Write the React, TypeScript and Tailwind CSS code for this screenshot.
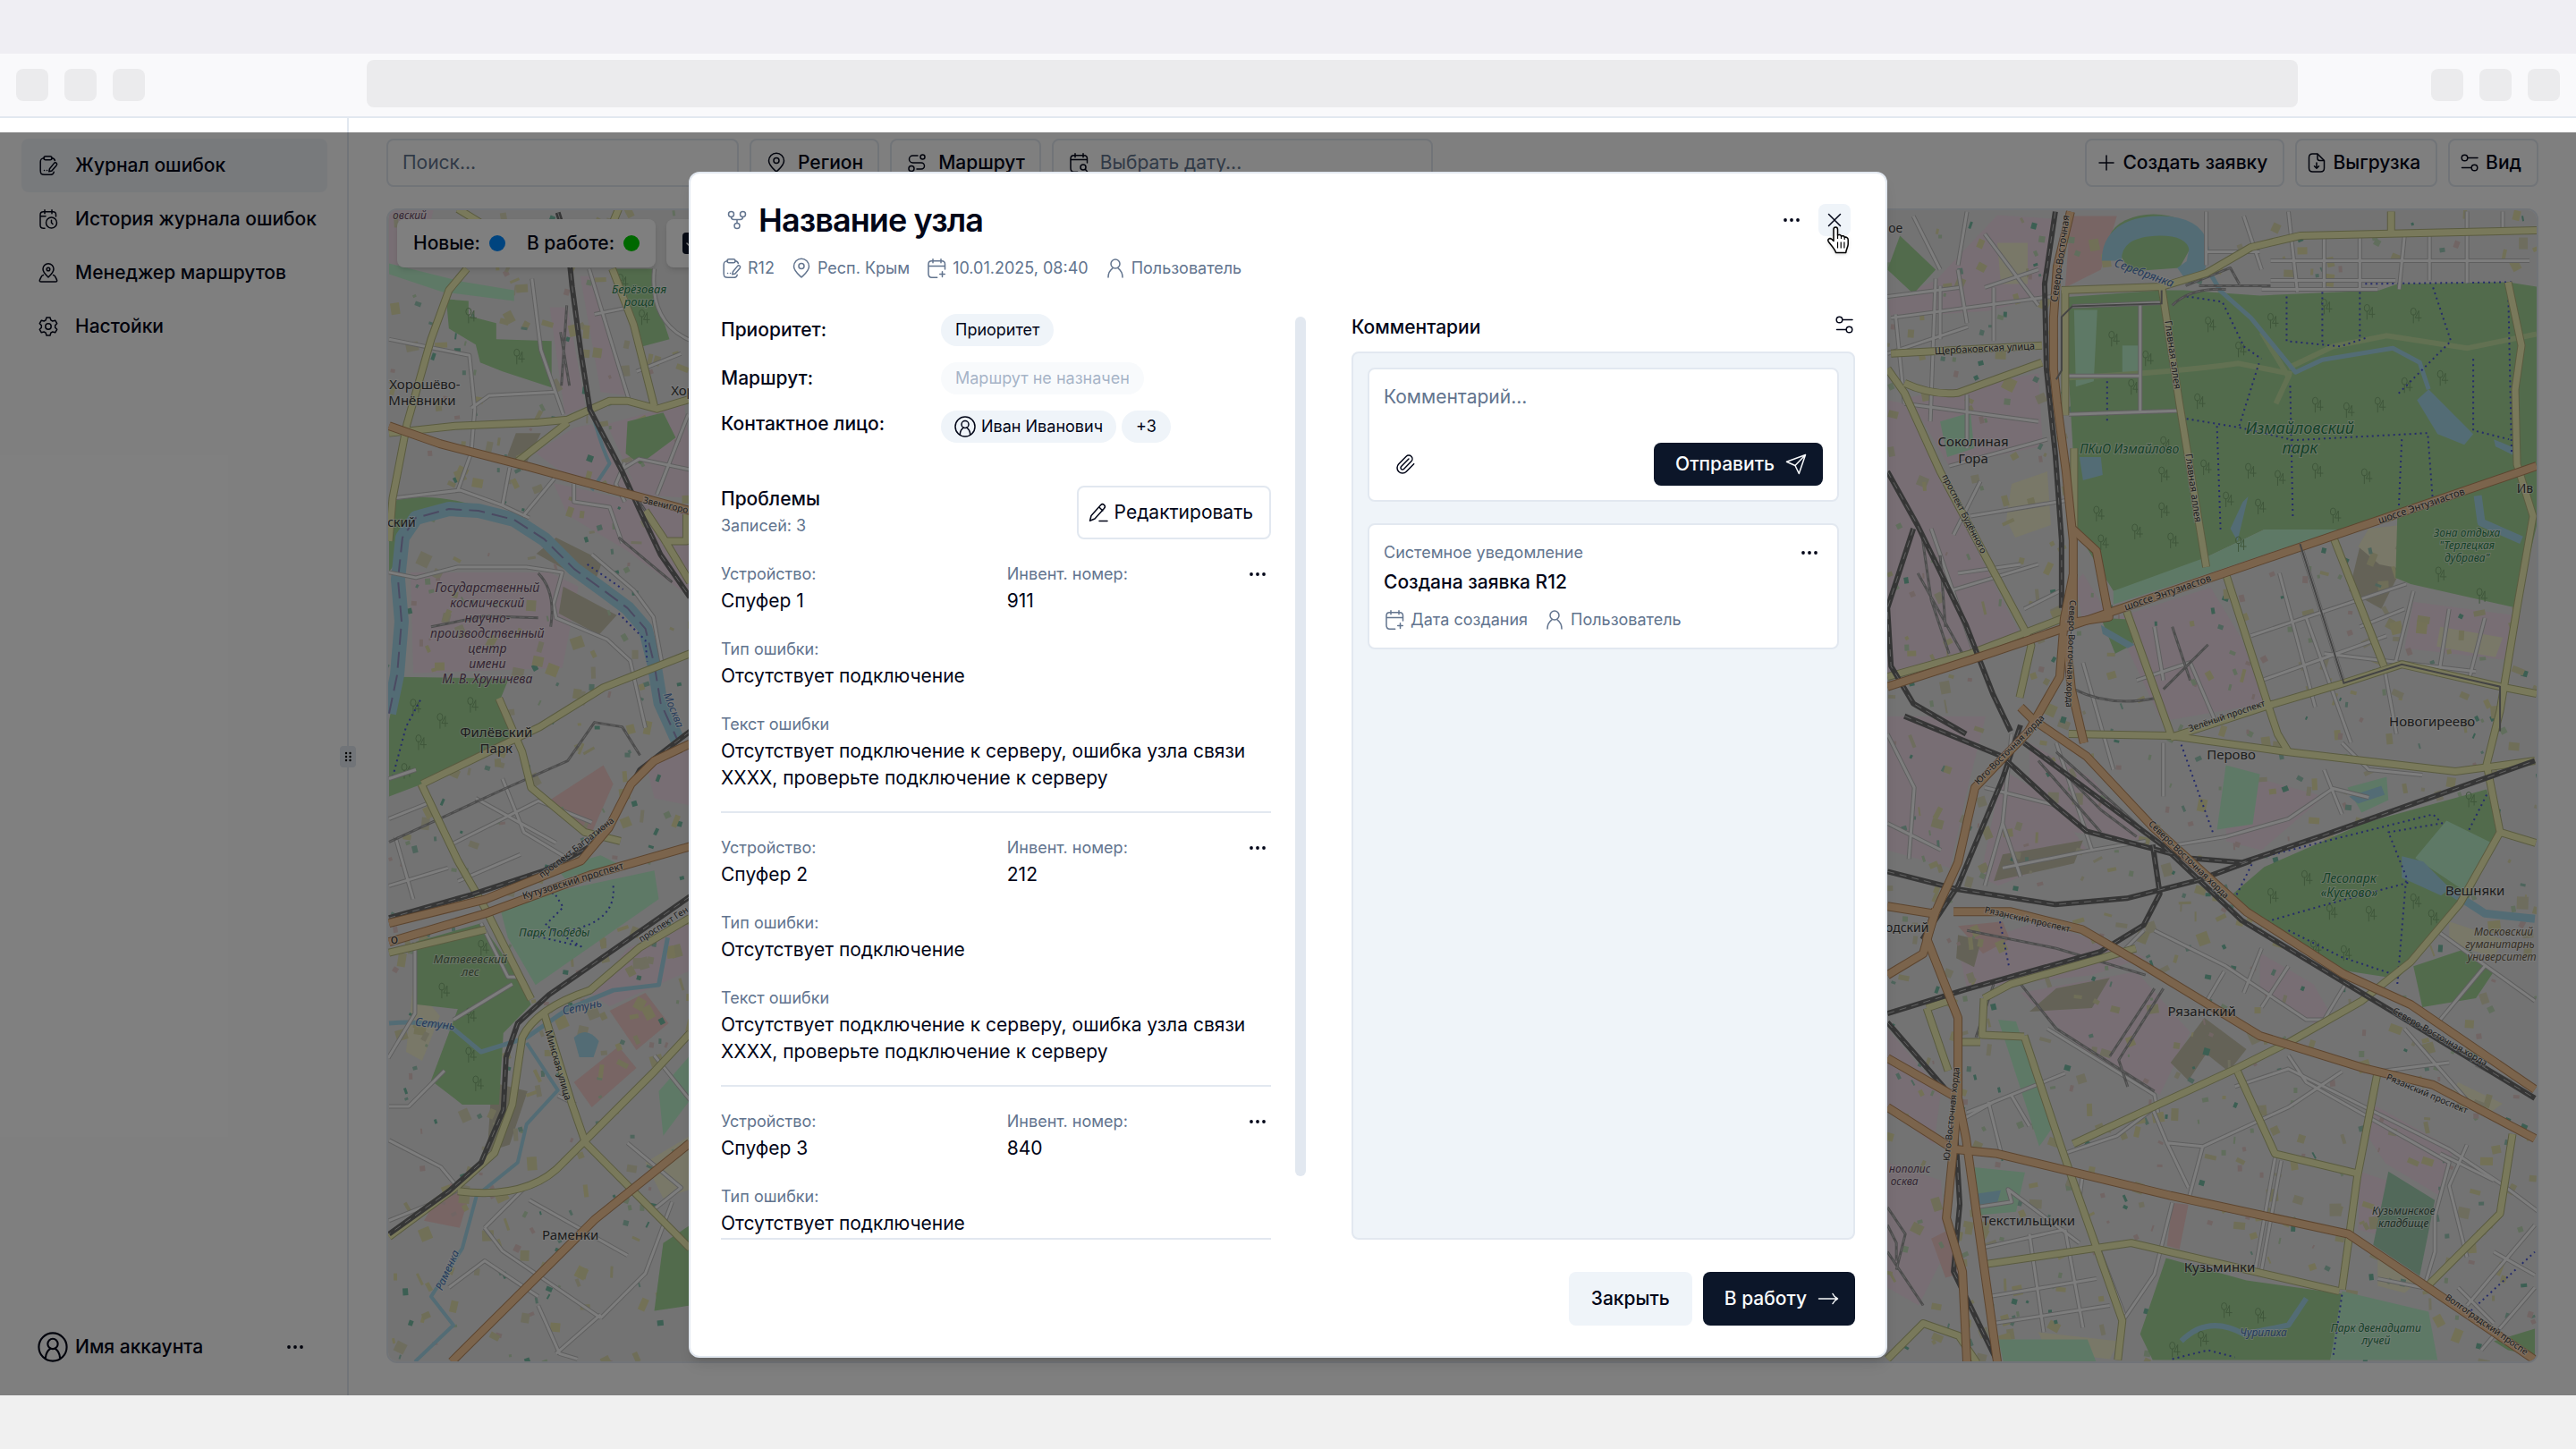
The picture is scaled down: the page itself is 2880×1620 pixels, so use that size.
import { ReactNode } from "react";
import clsx from "clsx";
import { Paperclip } from "lucide-react";

type IconProps = { className?: string };

const Svg = ({ className, children }: { className?: string; children: ReactNode }) => (
  <svg
    viewBox="0 0 24 24"
    fill="none"
    stroke="currentColor"
    strokeWidth={1.5}
    strokeLinecap="round"
    strokeLinejoin="round"
    aria-hidden="true"
    className={clsx("shrink-0", className ?? "h-6 w-6")}
  >
    {children}
  </svg>
);

const ClipboardEditIcon = (p: IconProps) => (
  <Svg {...p}>
    <path d="M7.5 3.8C4.6 4 3.2 4.6 3.2 8v9.5c0 4 1 4.8 4.8 4.8h5.5c3 0 4.4-.5 4.7-3M16 3.8c2 .2 3 .9 3.4 2.7" />
    <rect x="7" y="1.8" width="9" height="4" rx="2" />
    <path d="m12.8 18.8.6-3 5-6.2c.8-1 2-1 2.7-.3.8.7.7 1.7 0 2.6l-5.2 6.1-3.1.8ZM7.5 17.5h.1M10.5 17.5h.1" />
  </Svg>
);

const CalendarClockIcon = (p: IconProps) => (
  <Svg {...p}>
    <path d="M8 1.8v4M16 1.8v4M20.5 9V7c0-2.4-1-3.2-3.5-3.2H6.5C4 3.8 3 4.8 3 7.2v11.5c0 2.4 1 3.5 3.5 3.5H8M3 8.8h6" />
    <circle cx="15.5" cy="16" r="6" />
    <path d="M15.5 13.2V16l1.5 1.5" />
  </Svg>
);

const CalendarAddIcon = (p: IconProps) => (
  <Svg {...p}>
    <path d="M8 1.8v4M17 1.8v4M3 9.5h18.5M21.5 13V7.5c0-2.5-1-3.7-3.7-3.7H6.7C4 3.8 3 5 3 7.5V18c0 3 1 4.2 3.7 4.2h6M18.5 15.8v5.6M15.7 18.6h5.6" />
  </Svg>
);

const CalendarSearchIcon = (p: IconProps) => (
  <Svg {...p}>
    <path d="M8 1.8v4M17 1.8v4M3 8.5h18.5M21.5 12V7.5c0-2.5-1-3.7-3.7-3.7H6.7C4 3.8 3 5 3 7.5V18c0 3 1 4.2 3.7 4.2h4" />
    <circle cx="17" cy="17" r="3" />
    <path d="m19.3 19.3 2.2 2.4" />
  </Svg>
);

const MapUserIcon = (p: IconProps) => (
  <Svg {...p}>
    <path d="M12 17c-3-3-6-5.5-6-9.200a6 6 0 1 1 12 0C18 11.5 15 14 12 17Z" />
    <circle cx="12" cy="8" r="1.8" />
    <path d="M6.5 14.5c-1.5.3-2 .9-2.6 2.4l-1.4 3c-.6 1.4 0 2.1 1.5 2.1h16c1.5 0 2.1-.7 1.5-2.1l-1.4-3c-.6-1.500-1.100-2.100-2.600-2.400" />
  </Svg>
);

const SettingsIcon = (p: IconProps) => (
  <Svg {...p}>
    <path d="M10 2h4l.8 2.8 2 1.2 2.9-.8 2 3.5-2 2.1v2.4l2 2.1-2 3.5-2.9-.8-2 1.2L14 22h-4l-.8-2.8-2-1.2-2.9.8-2-3.5 2-2.1v-2.4l-2-2.1 2-3.5 2.9.8 2-1.2L10 2Z" />
    <circle cx="12" cy="12" r="3.2" />
  </Svg>
);

const PinIcon = (p: IconProps) => (
  <Svg {...p}>
    <path d="M12 22c-3.5-3.3-8.5-7-8.5-12.2a8.5 8.5 0 0 1 17 0C20.5 15 15.5 18.7 12 22Z" />
    <circle cx="12" cy="9.5" r="3" />
  </Svg>
);

const RouteIcon = (p: IconProps) => (
  <Svg {...p}>
    <circle cx="6" cy="18.5" r="3" />
    <circle cx="18.5" cy="5.5" r="2.5" />
    <path d="M13 4H7.5a4 4 0 0 0 0 8h9.500a3.500 3.500 0 0 1 0 7h-5" />
  </Svg>
);

const UserIcon = (p: IconProps) => (
  <Svg {...p}>
    <circle cx="12" cy="7" r="5" />
    <path d="M4 22c0-4.5 2-8 5-10.2M20 22c0-4.5-2-8-5-10.2" />
  </Svg>
);

const UserCircleIcon = (p: IconProps) => (
  <Svg {...p}>
    <circle cx="12" cy="12" r="11" />
    <circle cx="12" cy="9.5" r="4" />
    <path d="M6.3 20.5c.2-3.5 1.8-6 4-7.4M17.7 20.5c-.2-3.5-1.8-6-4-7.4" />
  </Svg>
);

const NodeIcon = (p: IconProps) => (
  <Svg {...p}>
    <circle cx="5.5" cy="5.5" r="3" />
    <circle cx="18.5" cy="5.5" r="3" />
    <circle cx="12" cy="18.5" r="3" />
    <path d="M5.5 8.5c0 2.3.8 3 3 3h7c2.2 0 3-.7 3-3M12 11.5v4" />
  </Svg>
);

const DotsIcon = (p: IconProps) => (
  <Svg {...p}>
    <g fill="currentColor" stroke="none">
      <circle cx="5" cy="12" r="1.9" />
      <circle cx="12" cy="12" r="1.9" />
      <circle cx="19" cy="12" r="1.9" />
    </g>
  </Svg>
);

const SlidersIcon = (p: IconProps) => (
  <Svg {...p}>
    <circle cx="6.5" cy="6.5" r="3.3" />
    <circle cx="17.5" cy="17.5" r="3.3" />
    <path d="M10 6.5h11M3.5 17.5H14" />
  </Svg>
);

const PlusIcon = (p: IconProps) => (
  <Svg {...p}>
    <path d="M12 4v16M4 12h16" />
  </Svg>
);

const FileDownIcon = (p: IconProps) => (
  <Svg {...p}>
    <path d="M13 2H7.5C4.500 2 3.500 3.200 3.500 6v12c0 2.800 1 4 4 4h9c3 0 4-1.200 4-4V9.500L13 2Z" />
    <path d="M13 2.500V7c0 1.700.8 2.500 2.500 2.500h4.500M12 12v6M9.500 15.800 12 18.200l2.500-2.400" />
  </Svg>
);

const PenIcon = (p: IconProps) => (
  <Svg {...p}>
    <path d="M4 15.500 14.500 3.800c1.300-1.400 2.800-1.400 4-.3 1.200 1.200 1.200 2.700-.1 4.100L8 19l-5.500 2.200L4 15.500ZM12.800 6l4 4M13 21.500h9" />
  </Svg>
);

const SendIcon = (p: IconProps) => (
  <Svg {...p}>
    <path d="M22.500 1.500 1.500 9.200l9.500 4.300 4.300 9 7.200-21ZM11 13.500 22 2" />
  </Svg>
);

const CloseIcon = (p: IconProps) => (
  <Svg {...p}>
    <path d="m5.500 5.500 13 13M18.500 5.500l-13 13" />
  </Svg>
);

const ArrowIcon = (p: IconProps) => (
  <Svg {...p}>
    <path d="M1.500 12h21M17 6.500c1.500 3 3 4.500 5.500 5.500-2.500 1-4 2.500-5.500 5.500" />
  </Svg>
);

const HandCursor = ({ className }: IconProps) => (
  <svg viewBox="0 0 28 32" className={className} aria-hidden="true">
    <path
      d="M9 16V4.500C9 1 13.500 1 13.500 4.500V11c1.500-1 3.500-.5 4 1 1.500-.8 3.300-.2 3.700 1.300 2-.6 4 .5 4 2.700v5c0 3-2 5-2.500 9.500H11.500C11 27 6 22 3.500 18.500 1.500 15.500 4.500 13.500 7 15.500l2 2Z"
      fill="#fff"
      stroke="#000"
      strokeWidth="1.5"
      strokeLinejoin="round"
    />
    <path d="M13.500 18.500v7M17.200 18.500v7M20.900 18.500v7M13.500 11v4M17.500 12v3M21.200 13.500V16" stroke="#000" strokeWidth="1.2" />
  </svg>
);

/* ---------- map ---------- */

// small repeatable generator, so that the houses stay in place between renders
const makeBuildings = () => {
  let seed = 17;
  const next = () => {
    seed = (seed * 16807) % 2147483647;
    return seed / 2147483647;
  };
  const colors = ["#dcdabc", "#e2e0ae", "#e6e3ac", "#dedcb0", "#9ccab8", "#78bea6", "#e3cbc8", "#c2dcba"];
  const list: { x: number; y: number; w: number; h: number; r: number; c: string }[] = [];
  for (let i = 0; i < 1500; i++) {
    const left = i % 3 === 0;
    const color = Math.floor(next() * colors.length);
    // sport grounds and schools are smaller than the housing blocks
    const size = color > 3 ? 5 : 12;
    list.push({
      x: Math.round(left ? 432 + next() * 340 : 2105 + next() * 733),
      y: Math.round(232 + next() * 1292),
      w: Math.round(2 + next() * size),
      h: Math.round(3 + next() * size),
      r: Math.round(next() * 60 - 30),
      c: colors[color],
    });
  }
  return list;
};

const buildings = makeBuildings();

const industrial = [
  "M613 342h20l20 111-23 10Z",
  "M647 307h16l37 134-30-4Z",
  "M597 505l43-28 20-4 33 47 24 32-84-20Z",
  "M677 473l86-24 7 48v59l-57-4Z",
  "M617 539l153 34v94l-70-52-67-40Z",
  "M457 639h156l32 16-18 91-167 6Z",
  "M720 850l50-20v70l-40-8Z",
  "M700 1060l70-30v55l-90 40-20-14Z",
  "M433 232h50l-10 40-40 30Z",
  "M2111 446l19 4 89 179 45 88-65 12-88 27Z",
  "M2364 691l109-35 35 58 25 72-115 20Z",
  "M2135 443l145-27 5 81-105 23Z",
  "M2234 239l62 4-12 88-60 15-109 8-4-19 54-23Z",
  "M2111 800h110l-20 80-20 90-70-20Z",
  "M2270 830l70 40 60 70-80-10-50-50Z",
  "M2240 860l50 30 45 60-100 40-20-10Z",
  "M2190 1060l90-30 120 40-60 20-140 15Z",
  "M2260 1110l130-24 60 68-34 70-90-54Z",
  "M2528 1065l60 35 20 35-18 10-62-40Z",
  "M2111 1150l60 70-8 60-52-40Z",
  "M2111 1300l60 20 5 80-30 60-35-20Z",
  "M2655 1235l90 50-16 52-60-36-20-30Z",
  "M2640 1310l30 10-12 60-20-5Z",
  "M2700 672l120 16-10 50-120-14Z",
  "M2490 860l110 30-70 60-40-10Z",
  "M2330 640l30 50-30 10-8-50Z",
];

const retail = [
  "M2316 240h52l-18 60-40 20Z",
  "M607 898l66-43 11 21-26 59Z",
  "M680 1130l40-20 26 34-36 30Z",
  "M640 1210l50-40 20 24-50 44Z",
  "M484 1345l18-22 22 10-12 40-40-8Z",
  "M2190 1035l50-5 8 20-30 16Z",
  "M2160 1385l20-10 10 50-14 4Z",
  "M2430 1345l18 2-10 50-14-4Z",
];

const brown = [
  "M2466 1138l47 35-20 25-25-20-20 30-20-20Z",
  "M575 483h28l-20 42-20-10Z",
  "M620 600l52 26-10 28-64-36Z",
  "M628 655l60 32-20 22-45-24Z",
  "M2240 955l90-16-10 26-90 20Z",
  "M2300 1105l60-12-20 34-70 4Z",
  "M548 1210l40 10-20 60-25 8Z",
  "M2190 1045l26 6-8 30-20-10Z",
  "M2640 610l30-20 14 50-20 40-36-20Z",
];

const forest = [
  "M497 333l25 2v17l31 8v18l62 2v52l-55-18-25-10-5-20-30-18Z",
  "M687 299h43l3 36 14 43-30 8-17-55Z",
  "M433 805l10-49 124 2-11 27 14 24 12 14-112 53-37 14Z",
  "M433 560q60-16 130 18-60-16-108 0l-6 40-16 20Z",
  "M700 470l40-10 14 28-40 30-16-12Z",
  "M462 1053l74-21 41 59 15 32-31 32-5 80h-41l-35-27 30-80-46-5Z",
  "M560 1020l120-30-60 30-40 10Z",
  "M740 1390l30-20v90l-40 6Z",
  "M2306 331l112-8h25l85 6 134-6 20-7 124-2 32 5v207l-221 65h-84l-65 31-40 23-64 15-40-65-10-176Z",
  "M2682 576l129-46 27-4v61l-22 92-119-27-17-7Z",
  "M2125 262l40 38-25 27-29-27Z",
  "M2350 690l36 2v28l-20 10Z",
  "M2498 999l35-30 114-50 135-37 15 47-35 75-80 90-65-10-94-55Z",
  "M2423 1407l90 25 107 15-13 74h-199l-14-29Z",
  "M2700 1080l60-20 30 26-20 30-60 10Z",
  "M2790 1500l46-14v30l-30-6Z",
  "M2360 262a50 30 0 0 1 98 0l-20 36-56 4Z",
];

const park = [
  "M556 1010l174-37 5 32-46 32-92 64-31-53Z",
  "M2364 660l104-38 65-31h84l-149 50-104 34Z",
  "M2737 917l55 27-30 55-60-40Z",
  "M2620 1444l97 23 10 54h-120Z",
  "M2490 855l38 10-8 56-40 6Z",
  "M2205 1305l60 6-10 44-44 4Z",
  "M2170 470l34-10 4 40-30 10Z",
  "M433 305l60 20 80 10v-12l-60-10-80-20Z",
  "M620 970l50-14 20 10-60 16Z",
  "M2626 880l44-12 2 26-30 14Z",
  "M2235 1140l20 2 40 120-14 20Z",
  "M735 1220l35-40v50l-30 40Z",
  "M2235 1498h100l10 26h-104Z",
  "M2320 345h26l-4 80-20 6Z",
  "M2374 385h20v36h-20Z",
];

const school = [
  "M2660 1400l50 30-20 16-30-8Z",
  "M2250 540l40-14 4 60-40 14-10-20Z",
  "M2234 270h34v46h-30Z",
  "M2650 590l36-4 6 50-30-6-24-20Z",
  "M2740 1030l60 20-10 20-50-16Z",
  "M2750 1210l50 24-20 14-40-20Z",
  "M2730 700l70 12-8 22-66-12Z",
  "M460 1100l30 36-20 50-18-10Z",
  "M720 1300l50-30v60l-30 10Z",
  "M2280 1490l90 10-10 20-70-8Z",
];

const water = [
  "M2717 434l50 50-10 12-30-12-23-38Z",
  "M2326 510h24l2 20-22 6Z",
  "M2495 590l14-30 6-6-12 50Z",
  "M2350 698l38 22-8 4-28-16Z",
  "M2628 890l36-12 4 10-30 10Z",
  "M2210 1335l28-4-4 14-20 2Z",
  "M2790 490l24 10-2 8-20-10Z",
  "M2687 957l24 6 30 30-10 8-44-20Z",
  "M640 1160q14-14 28 4l-6 18h-16Z",
];

const rivers = [
  { d: "M433 797l9-43 5-60-4-47 5-47 15-22 37-10 33 2 40 10 34 22 33 33 33 24 27 20 20 23 10 40 7 43 20 44", w: 16 },
  { d: "M433 1144q40-4 72 6l31 26 51-16 46-32 51-21 51-6 10-53", w: 5 },
  { d: "M587 1166l35 53-35 38-10 43-46 37-16 59-35 54 25 32-43 41", w: 4 },
  { d: "M660 457q10 40 20 60l-20 30", w: 4 },
  { d: "M2362 290q0-38 54-39 40 0 44 26l-4 20-14 10", w: 22 },
  { d: "M2470 300l14 24 34 30 50 61 30-14 79-13 30 16 10 30", w: 5 },
  { d: "M2772 553l4 30 45 20", w: 9 },
  { d: "M2740 995l40 26 56 6", w: 9 },
  { d: "M2440 1500q30-30 70-8l50-10 20-30", w: 6 },
];

const streets = [
  "M433 378l90 18 6 60-4 50",
  "M525 455l20-14 75-4",
  "M510 547l15-42M560 564l8-42M583 576l35-42",
  "M437 556l76-9 47 17 30 14",
  "M433 639l30 6 47-12h77l40 6-10 36 3 15 57 24 26 24 17 75",
  "M660 619l47 40 22 30 10 54",
  "M593 310l10 80 25 72M657 299l45 148M663 350l40-8M710 414l50-20",
  "M730 299q-6 60 40 80M733 552l35-90M693 524l20-12 57 12",
  "M697 560l-10-20 10-24M640 540l0 20 40 6 14 40",
  "M433 990l66-20M433 915l50-20M460 1005l-20-70M510 985l70-30M530 892l90 50",
  "M500 945l100-50 60 24M560 870l24 60 50 30M433 870l30-10",
  "M462 1053v80l-30 50M505 1140l66-40M536 1032l30 60 10 0M433 1237h22l40-40",
  "M433 1275l58 30 20 24M433 1365l50-20 30-16M540 1373l50-50M540 1373l20 26 110 75M590 1342l110 62",
  "M670 1474l50-50 30-80M620 1514l50-44M500 1440l40-30 60 40M700 1278l60 50-30 24",
  "M600 1460l24 54 20 6M730 1180l40 50M622 1225l20 10",
  "M2111 394l90-30M2120 350l10 100M2165 310l-6 160M2190 300l10 60M2115 354l180-24M2111 330l80-10",
  "M2140 240l30 60M2200 235l-10 60M2220 260l60 80M2220 320l60-20M2170 378v-60M2230 380v-60",
  "M2130 450l150 20M2180 520l110-30M2200 500v-60M2204 576l110-18M2160 590l50 144M2185 597l30-60",
  "M2180 660l100-30M2264 680l40-20M2190 640l70-10",
  "M2314 462l122-4M2314 419h80v40M2394 340v120M2318 341l100-4",
  "M2468 235v60M2510 240l20 60M2560 235l10 90M2600 260v60M2640 262v60M2690 262l-6 60M2718 262v50",
  "M2468 280h60M2540 290h290M2540 312h140M2530 322h130M2760 235v80M2800 235v22",
  "M2518 710l174-58M2530 760l140-50M2580 690l50 140M2550 640l40 150M2640 700l50-20M2667 744l14 76",
  "M2573 607l49 156M2700 660l-20 80M2740 680l-12 76M2780 690l-18 70M2600 730l170 20",
  "M2390 760l60-20 30 70M2330 740l34 120M2410 700l10 60",
  "M2250 820l-10 100 20 60M2300 830l30 90 10 30-100 20",
  "M2111 820l30 60-6 80M2111 920l60 30M2220 990l20-70M2220 880l80 20M2340 950l60-10",
  "M2430 945l60-10 70-20 50-34 40 10M2600 860l20 50M2420 830v60M2620 830l30 30 60 6",
  "M2398 1040l-20 20M2410 1040l80 40 90 60 20 0 30-50M2488 1086l-20 34M2530 1060l-20 50M2560 1080l-30 46",
  "M2290 1150l120 74 4 20M2310 1200l-110 44M2224 1232l15 60M2180 1260l50-28M2250 1225l20 34",
  "M2408 1240l16 38 40 4 96-44 60-40M2408 1240l-40 30-60 20M2464 1282l-16 60M2424 1278l24 50",
  "M2545 1295l-22 125M2552 1298l-22 122M2500 1215l60-20 180 90 60 40 40 30",
  "M2560 1180l20 30 160 90-16 60 0 40-12 40M2660 1198l80-10M2730 1290l60 30",
  "M2330 1310l-4 30 50 130M2219 1395l90-20M2225 1450l120-20M2230 1480l130-20M2270 1380l16 110M2310 1375l20 110",
  "M2210 1350l40-6-4-14 80 60M2430 1345l-20 80-34 50",
  "M2730 1043l106 76M2780 1080l-50 60M2760 1280l-20 46 20 80M2660 1430l50 10M2836 1370l-76 90M2836 1440l-60 70",
  "M2790 1400l46 26M2750 1440l40 40M2770 1190l40 20M2690 1150l70 80M2710 1130l60 40",
];

const yellow = [
  "M520 299l-20 24-20 55-27 95-16 83-4 48",
  "M433 483l74-8 93-4 33-3 47-21h20l33 9 37-11",
  "M573 518l60-47",
  "M683 299l24 63 23 91",
  "M510 232l26 16M690 232l-10 24",
  "M470 876l132-64 71-44 97-38",
  "M556 780l26 60 10 40 60 50 40 10",
  "M469 876l41 86 31 54 51 101",
  "M770 1026l-56 33-56 48q-60 20-76 53l-11 75-20 54-41 37-77 57",
  "M607 1134l31 101 15 43 117 118",
  "M510 1332q80 10 118-32l102-102 40-43",
  "M433 1065l108-26",
  "M720 570l20 30 30 50M740 604h26v-30",
  "M2306 323l112-4 50-15 50-29 55-13 265-6",
  "M2418 319l20 131 30 183",
  "M2675 235v24",
  "M2111 411l19 27 40 88 94 176 8 19-13 58",
  "M2115 394l169-9M2130 427q30 14 60 11l94-34",
  "M2310 323v140M2320 500v100",
  "M2111 756l93-26 115-44",
  "M2610 599l57 145M2490 641l48 149 10 30 12 20M2379 683l49 137",
  "M2428 824l110-36 84-25 65-21 110 25 41 8",
  "M2806 314l15 71-7 49 2 84 18 58-18 103-19 115-15 60 15 76-45 80-55 65-55 44-79 45-60 30-184 85",
  "M2314 820l114 2 130 18 189 22 89-12M2797 930l40 12",
  "M2264 1158l40 120 10 29 60 170-5 44",
  "M2219 1414l165-24 233 54",
  "M2660 1198l-23 119-17 125",
  "M2503 1198l42 92 92 22",
  "M2811 1268l-14 89-85 85",
  "M2155 1127l30-10M2219 1116l-2 41 47 2M2219 1116l30-16 140-40",
  "M2155 1127l24 70M2185 1165h30",
  "M2111 1520l40-40 40 14 20 30",
];

const orange = [
  "M433 475l57 20 97 25 80 22 103 28",
  "M770 831l-40 19-26 26-25 49-31 37-107 43-108 27",
  "M433 1053l108-32 117-43 112-32",
  "M770 1278l-107 86-160 159",
  "M2316 235l-15 62-4 57v57l4 39 10 76 8 77v38l-10 50-5 65-35 61",
  "M2319 641v54l40-6-14-74-26-24",
  "M2111 767l93-30 115-39 154-53 365-125",
  "M2269 817l-60 63-19 84-25 55-10 30 35 89v85l-5 60-8 79 18 60 5 102",
  "M2111 1183l79 45 9 45 35 250",
  "M2111 1013l50 8M2111 1090l40-24 14-50",
  "M2260 790l14 14 60 41 74 79 105 95 109 70 75 34 139 95",
  "M2311 710l6 60 14 60",
  "M2185 1019h64l80 20 69 40 130 79 119 37 75 18 114 60",
  "M2111 1238l74 47 49 5 194 47 199 43 85 57 124 84",
];

const rails = [
  "M622 236l11 35 5 48 10 75 10 63 35 67 20 44 24 51 33 48",
  "M770 817l-56 43-30 54-26 32-51 27-82 27-92 26",
  "M770 1002l-66 46-92 64-35 32-13 38-3 59-25 59-36 32-67 48",
  "M2299 235l-12 81 2 95 10 96 7 96v76",
  "M2111 526l34 61 54 111 30 77 20 42",
  "M2140 590l-29 89 4 65 25 42 59 34",
  "M2264 830l154 114 90 85 164 99 164 100",
  "M2130 800l109 45 60 55 35 29 114 30 60 5 90-30 238-84",
  "M2111 974l79 20 109 17 80-7 79-20 60-22",
  "M2111 1133l88-27 150-42 49-30 18-35-8-55",
  "M2111 1143l74 85 7 119-7 75 49 101",
  "M2150 1050l40-60 50-120 20-60",
];

const yards = [
  "M433 941l128-59 72-32 30-43 31 5 20 32",
  "M2430 340q20-20 60-18M2445 318l50-20 10 18M2460 318h80",
  "M2150 600l10 70 20 60M2170 620l6 80M2145 640l50 90",
  "M2290 845l60 60 40 30M2300 840l100 90M2280 850l70 80",
  "M2320 770q40 20 90 10M2430 700l20 60M2470 720l-50 50",
  "M2260 1100l40 50 110 70M2420 1105l-50 80 10 30M2410 1105l-50 76",
  "M2111 1350l20 30-10 40M2111 1370l10 20 0 20M2111 1400l40 60",
  "M2230 1100l-20 60M2200 1040l100 20 100 30",
  "M625 370l10 60M632 340l-6 90M700 540l60 90M690 600l60 50",
  "M480 700l60-12 60 2M600 640q20 20 14 60",
];

const trails = [
  "M2357 419v50M2480 475l4 116M2562 430l3 150M2687 490l-4 90",
  "M2446 330l40 6 24 50 20 14M2558 330v50l60 6 30-10M2640 325v50M2722 320l20 60-60 60",
  "M2806 316l4 190M2767 400v80l40 10M2446 467l60 10 60 14 150-8 6 80",
  "M2505 475l22-70M2640 316l170-2M2598 325v60",
  "M2502 1000l20-40 120-30 80-20 10 10-60 10 20 50-10 120M2536 1030l70-20 90-24M2560 1040l60 30 60 20",
  "M2440 832l36 100M2782 888l-20 40M2237 1030l10 50M2620 1448l-10 70",
  "M468 782l-16 30-16 60M655 630l40 28M690 685l30 30 2 24",
  "M568 1008l50-10 10 16-20 20 40 24-60-14M684 990q4 40-50 50",
  "M2760 1470l76-70M2430 1520l40-10 30 8",
];

const industrialPlace = "#6a4a66";
const parkPlace = "#2c8450";
const dark = "#3a3a3a";
const blue = "#4c78b8";

type Label = { x: number; y: number; t: string; s?: number; c?: string; i?: boolean; r?: number };

const labels: Label[] = [
  { x: 473, y: 434, t: "Хорошёво-", c: dark },
  { x: 470, y: 452, t: "Мнёвники", c: dark },
  { x: 762, y: 441, t: "Хор", c: dark },
  { x: 447, y: 588, t: "ский", s: 14, c: dark },
  { x: 713, y: 327, t: "Берёзовая", s: 13, c: parkPlace, i: true },
  { x: 713, y: 341, t: "роща", s: 13, c: parkPlace, i: true },
  { x: 456, y: 243, t: "овский", s: 12, c: industrialPlace, i: true },
  { x: 543, y: 661, t: "Государственный", s: 14, c: industrialPlace, i: true },
  { x: 543, y: 678, t: "космический", s: 14, c: industrialPlace, i: true },
  { x: 543, y: 695, t: "научно-", s: 14, c: industrialPlace, i: true },
  { x: 543, y: 712, t: "производственный", s: 14, c: industrialPlace, i: true },
  { x: 543, y: 729, t: "центр", s: 14, c: industrialPlace, i: true },
  { x: 543, y: 746, t: "имени", s: 14, c: industrialPlace, i: true },
  { x: 543, y: 763, t: "М. В. Хруничева", s: 14, c: industrialPlace, i: true },
  { x: 742, y: 567, t: "Звенигоро", s: 10, c: dark, r: 13 },
  { x: 748, y: 795, t: "Москва", s: 12, c: blue, r: 68, i: true },
  { x: 553, y: 823, t: "Филёвский", c: dark },
  { x: 553, y: 841, t: "Парк", c: dark },
  { x: 645, y: 950, t: "проспект Багратиона", s: 10, c: dark, r: -38 },
  { x: 640, y: 988, t: "Кутузовский проспект", s: 11, c: dark, r: -17 },
  { x: 742, y: 1036, t: "проспект Ген", s: 10, c: dark, r: -33 },
  { x: 618, y: 1047, t: "Парк Победы", s: 13, c: parkPlace, i: true },
  { x: 524, y: 1077, t: "Матвеевский", s: 13, c: "#56704f", i: true },
  { x: 524, y: 1091, t: "лес", s: 13, c: "#56704f", i: true },
  { x: 484, y: 1149, t: "Сетунь", s: 13, c: blue, i: true, r: 6 },
  { x: 650, y: 1130, t: "Сетунь", s: 13, c: blue, i: true, r: -12 },
  { x: 619, y: 1192, t: "Минская улица", s: 11, c: dark, r: 74 },
  { x: 502, y: 1422, t: "Раменка", s: 12, c: blue, i: true, r: -66 },
  { x: 636, y: 1386, t: "Раменки", c: dark },
  { x: 439, y: 1055, t: "о", s: 14, c: dark },
  { x: 2120, y: 258, t: "ое", s: 14, c: dark },
  { x: 2308, y: 288, t: "Северо-Восточная", s: 11, c: dark, r: -82 },
  { x: 2397, y: 308, t: "Серебрянка", s: 13, c: blue, i: true, r: 20 },
  { x: 2220, y: 392, t: "Щербаковская улица", s: 11, c: dark, r: -3 },
  { x: 2207, y: 498, t: "Соколиная", c: dark },
  { x: 2207, y: 517, t: "Гора", c: dark },
  { x: 2194, y: 575, t: "проспект Будённого", s: 10, c: dark, r: 63 },
  { x: 2382, y: 506, t: "ПКиО Измайлово", s: 14, c: parkPlace, i: true },
  { x: 2573, y: 484, t: "Измайловский", s: 18, c: parkPlace, i: true },
  { x: 2573, y: 506, t: "парк", s: 18, c: parkPlace, i: true },
  { x: 2427, y: 396, t: "Главная аллея", s: 11, c: dark, r: 82 },
  { x: 2450, y: 545, t: "Главная аллея", s: 11, c: dark, r: 82 },
  { x: 2710, y: 568, t: "шоссе Энтузиастов", s: 11, c: dark, r: -19 },
  { x: 2426, y: 665, t: "шоссе Энтузиастов", s: 11, c: dark, r: -19 },
  { x: 2825, y: 550, t: "Ив", s: 14, c: dark },
  { x: 2760, y: 599, t: "Зона отдыха", s: 12, c: parkPlace, i: true },
  { x: 2760, y: 613, t: "\"Терлецкая", s: 12, c: parkPlace, i: true },
  { x: 2760, y: 627, t: "дубрава\"", s: 12, c: parkPlace, i: true },
  { x: 2313, y: 730, t: "Северо-Восточная хорда", s: 10, c: dark, r: 92 },
  { x: 2492, y: 803, t: "Зелёный проспект", s: 10, c: dark, r: -19 },
  { x: 2721, y: 811, t: "Новогиреево", c: dark },
  { x: 2496, y: 848, t: "Перово", c: dark },
  { x: 2250, y: 840, t: "Юго-Восточная хорда", s: 10, c: dark, r: -45 },
  { x: 2446, y: 963, t: "Северо-Восточная хорда", s: 10, c: dark, r: 44 },
  { x: 2628, y: 987, t: "Лесопарк", s: 14, c: parkPlace, i: true },
  { x: 2628, y: 1003, t: "«Кусково»", s: 14, c: parkPlace, i: true },
  { x: 2769, y: 1001, t: "Вешняки", c: dark },
  { x: 2801, y: 1046, t: "Московский", s: 12, c: "#6b5f49", i: true },
  { x: 2797, y: 1060, t: "гуманитарнь", s: 12, c: "#6b5f49", i: true },
  { x: 2799, y: 1074, t: "университет", s: 12, c: "#6b5f49", i: true },
  { x: 2133, y: 1042, t: "одский", s: 14, c: dark },
  { x: 2267, y: 1031, t: "Рязанский проспект", s: 10, c: dark, r: 13 },
  { x: 2463, y: 1136, t: "Рязанский", c: dark },
  { x: 2728, y: 1162, t: "Северо-Восточная хорда", s: 10, c: dark, r: 30 },
  { x: 2714, y: 1226, t: "Рязанский проспект", s: 10, c: dark, r: 23 },
  { x: 2186, y: 1246, t: "Юго-Восточная хорда", s: 10, c: dark, r: -84 },
  { x: 2136, y: 1311, t: "нополис", s: 12, c: industrialPlace, i: true },
  { x: 2130, y: 1325, t: "осква", s: 12, c: industrialPlace, i: true },
  { x: 2269, y: 1370, t: "Текстильщики", c: dark },
  { x: 2483, y: 1422, t: "Кузьминки", c: dark },
  { x: 2689, y: 1358, t: "Кузьминское", s: 12, c: "#3d5a48", i: true },
  { x: 2689, y: 1372, t: "кладбище", s: 12, c: "#3d5a48", i: true },
  { x: 2658, y: 1490, t: "Парк двенадцати", s: 12, c: parkPlace, i: true },
  { x: 2658, y: 1504, t: "лучей", s: 12, c: parkPlace, i: true },
  { x: 2532, y: 1495, t: "Чурилиха", s: 12, c: blue, i: true },
  { x: 2780, y: 1484, t: "Волгоградский проспе", s: 10, c: dark, r: 35 },
];

const trees = [
  [2362, 376], [2470, 360], [2540, 356], [2400, 398], [2504, 388], [2384, 430], [2458, 446], [2590, 450],
  [2625, 456], [2660, 450], [2690, 428], [2730, 420], [2420, 494], [2515, 524], [2465, 520], [2548, 532],
  [2590, 524], [2645, 530], [2418, 528], [2345, 572], [2418, 568], [2490, 556], [2526, 564], [2610, 574],
  [2388, 592], [2428, 602], [2504, 606], [2350, 604], [2728, 640], [2774, 664], [2600, 340], [2648, 346],
  [2700, 350], [2540, 1000], [2578, 980], [2606, 1018], [2650, 1020], [2700, 1006], [2762, 892], [2588, 1058],
  [2622, 1064], [2720, 1024], [2488, 1464], [2526, 1470], [2430, 1508], [2462, 1496], [460, 788], [524, 786],
  [490, 804], [466, 828], [450, 860], [536, 1058], [492, 1106], [522, 1134], [522, 1178], [530, 1210], [576, 396],
  [522, 350], [716, 352], [692, 312],
];

const Paths = ({ list, fill }: { list: string[]; fill: string }) => (
  <g fill={fill}>
    {list.map((d) => (
      <path key={d} d={d} />
    ))}
  </g>
);

const Lines = ({ list, color, width, dash }: { list: string[]; color: string; width: number; dash?: string }) => (
  <g fill="none" stroke={color} strokeWidth={width} strokeDasharray={dash} strokeLinejoin="round">
    {list.map((d) => (
      <path key={d} d={d} />
    ))}
  </g>
);

const CityMap = () => (
  <svg
    viewBox="432 232 2406 1292"
    preserveAspectRatio="xMidYMid slice"
    className="absolute inset-0 h-full w-full font-['Noto_Sans',sans-serif]"
    role="img"
    aria-label="Карта"
  >
    <rect x="432" y="232" width="2406" height="1292" fill="#e6e6e6" />
    <Paths list={industrial} fill="#f0dde8" />
    <Paths list={retail} fill="#f0cbc8" />
    <Paths list={brown} fill="#c8c5ae" />
    <Paths list={school} fill="#f2f0d0" />
    {buildings.map((b, i) => (
      <rect
        key={i}
        x={b.x}
        y={b.y}
        width={b.w}
        height={b.h}
        fill={b.c}
        transform={`rotate(${b.r} ${b.x} ${b.y})`}
      />
    ))}
    <Paths list={forest} fill="#a4d698" />
    <path d="M2672 1310l52 32-17 85-52-35Z" fill="#a4d2b4" />
    <Paths list={park} fill="#bdf2cd" />
    <path d="M2314 421q120-6 190-16l60 12M2560 410l50-24 60-12 90 14 78-16M2530 370l30 50-14 30" fill="none" stroke="#c4e2a4" strokeWidth="6" />
    <Paths list={water} fill="#a6d9ea" />
    {rivers.map((r) => (
      <path key={r.d} d={r.d} fill="none" stroke="#a6d9ea" strokeWidth={r.w} strokeLinejoin="round" />
    ))}
    <Lines list={[rivers[0].d]} color="#9794c4" width={2} dash="18 8" />
    <g fill="none" stroke="#7fae76" strokeWidth="1">
      {trees.map(([x, y]) => (
        <path key={`${x}-${y}`} d={`M${x} ${y}v10M${x - 3} ${y - 3}a3 4 0 1 1 6 0a3 4 0 1 1-6 0M${x + 6} ${y + 8}v-12l-4 8h7`} />
      ))}
    </g>
    <Lines list={trails} color="#4b58d6" width={2} dash="2 4" />
    <Lines list={streets} color="#bebebe" width={5} />
    <Lines list={streets} color="#fbfbfb" width={3} />
    <Lines list={yards} color="#9a9a9a" width={3} />
    <Lines list={yards} color="#c4c4c4" width={1} dash="6 4" />
    <Lines list={yellow} color="#b4b780" width={9} />
    <Lines list={yellow} color="#f3f2b6" width={7} />
    <Lines list={rails} color="#6c6c6c" width={6} />
    <Lines list={rails} color="#c4c4c4" width={1} dash="8 6" />
    <Lines list={orange} color="#b98a5e" width={10} />
    <Lines list={orange} color="#f6c898" width={8} />
    <path d="M2573 607l49 156 65-21 110 25v50M2418 323v15l-100 3-12 12v60l-6 10" fill="none" stroke="#888" strokeWidth="2" />
    {labels.map((l) => (
      <text
        key={`${l.t}-${l.x}-${l.y}`}
        x={l.x}
        y={l.y}
        fontSize={l.s ?? 15}
        fontStyle={l.i ? "italic" : "normal"}
        fill={l.c}
        stroke="#ffffff"
        strokeOpacity="0.5"
        strokeWidth="2"
        paintOrder="stroke"
        textAnchor="middle"
        transform={l.r ? `rotate(${l.r} ${l.x} ${l.y})` : undefined}
      >
        {l.t}
      </text>
    ))}
  </svg>
);

/* ---------- page ---------- */

const navItems = [
  { label: "Журнал ошибок", icon: ClipboardEditIcon },
  { label: "История журнала ошибок", icon: CalendarClockIcon },
  { label: "Менеджер маршрутов", icon: MapUserIcon },
  { label: "Настойки", icon: SettingsIcon },
];

const problems = [
  { device: "Спуфер 1", number: "911" },
  { device: "Спуфер 2", number: "212" },
  { device: "Спуфер 3", number: "840" },
];

const BarSquares = () => (
  <div className="flex gap-[18px]">
    {[0, 1, 2].map((i) => (
      <span key={i} className="h-9 w-9 rounded-lg bg-[#ebebed]" />
    ))}
  </div>
);

const BrowserBar = () => (
  <header>
    <div className="h-15 bg-[#efeef3]" />
    <div className="flex h-18 items-center border-b-2 border-slate-200 bg-[#f9f9fb] px-[18px]">
      <BarSquares />
      <div className="mr-[149px] mb-1 ml-[248px] h-[53px] flex-1 rounded-lg bg-[#ebebed]" />
      <BarSquares />
    </div>
  </header>
);

const Sidebar = () => (
  <aside className="relative flex w-[390px] shrink-0 flex-col justify-between border-r-2 border-slate-200 pt-[23px] pr-[22px] pb-6 pl-6">
    <nav>
      {navItems.map(({ label, icon: ItemIcon }, i) => (
        <a
          key={label}
          href="#"
          className={clsx(
            "flex h-15 items-center gap-[18px] rounded-lg px-[18px] font-medium whitespace-nowrap",
            i === 0 && "bg-slate-100"
          )}
        >
          <ItemIcon />
          {label}
        </a>
      ))}
    </nav>
    <div className="flex h-15 items-center pr-6 pl-[18px]">
      <UserCircleIcon className="h-[34px] w-[34px]" />
      <span className="ml-2 flex-1 font-medium">Имя аккаунта</span>
      <button type="button" aria-label="Меню аккаунта">
        <DotsIcon />
      </button>
    </div>
    <span className="absolute top-1/2 -right-2.5 flex h-6 w-[18px] -translate-y-1/2 items-center justify-center rounded bg-slate-200">
      <svg viewBox="0 0 8 12" className="h-3 w-2" aria-hidden="true">
        {[2, 6, 10].map((y) => (
          <g key={y}>
            <circle cx="2" cy={y} r="1.2" />
            <circle cx="6.5" cy={y} r="1.2" />
          </g>
        ))}
      </svg>
    </span>
  </aside>
);

const Toolbar = () => (
  <div className="flex h-[54px] gap-3 font-medium">
    <input
      type="text"
      aria-label="Поиск"
      placeholder="Поиск..."
      className="w-[394px] rounded-lg border-2 border-slate-200 px-4 font-normal placeholder:text-slate-500"
    />
    <button type="button" className="flex items-center gap-3 rounded-lg border-2 border-slate-200 px-4">
      <PinIcon />
      Регион
    </button>
    <button type="button" className="flex items-center gap-3 rounded-lg border-2 border-slate-200 px-4">
      <RouteIcon />
      Маршрут
    </button>
    <button
      type="button"
      className="flex w-[426px] items-center gap-3 rounded-lg border-2 border-slate-200 px-4 font-normal"
    >
      <CalendarSearchIcon />
      <span className="text-slate-500">Выбрать дату...</span>
    </button>
    <div className="ml-auto flex gap-3">
      <button type="button" className="flex items-center gap-1.5 rounded-lg border-2 border-slate-200 pr-[17px] pl-2.5">
        <PlusIcon />
        Создать заявку
      </button>
      <button type="button" className="flex items-center gap-1.5 rounded-lg border-2 border-slate-200 pr-[17px] pl-2.5">
        <FileDownIcon />
        Выгрузка
      </button>
      <button type="button" className="flex items-center gap-1.5 rounded-lg border-2 border-slate-200 pr-[17px] pl-2.5">
        <SlidersIcon />
        Вид
      </button>
    </div>
  </div>
);

const MapPanel = () => (
  <div className="relative min-h-0 flex-1 overflow-hidden rounded-xl border-2 border-slate-200">
    <CityMap />
    <div className="absolute top-2.5 left-2.5 flex gap-3 font-medium">
      <div className="flex h-[54px] items-center rounded-lg bg-white px-[18px] shadow-md">
        Новые:
        <span className="ml-2.5 h-[18px] w-[18px] rounded-full bg-[#0088ff]" />
        <span className="ml-6">В работе:</span>
        <span className="ml-2.5 h-[18px] w-[18px] rounded-full bg-[#00d000]" />
      </div>
      <div className="flex h-[54px] w-48 items-center rounded-lg bg-white px-[18px] shadow-md">
        <span className="relative h-6 w-6">
          <input
            type="checkbox"
            defaultChecked
            aria-label="Показать маршруты"
            className="block h-6 w-6 appearance-none rounded bg-slate-900"
          />
          <Svg className="pointer-events-none absolute inset-0 h-6 w-6 text-white">
            <path d="m5 12 4 4 8-8" />
          </Svg>
        </span>
      </div>
    </div>
  </div>
);

const Meta = ({ icon: ItemIcon, children }: { icon: (p: IconProps) => ReactNode; children: ReactNode }) => (
  <span className="flex items-center gap-1.5">
    <ItemIcon />
    {children}
  </span>
);

const Field = ({ label, children }: { label: string; children: ReactNode }) => (
  <div>
    <dt className="text-lg/[30px] text-slate-500">{label}</dt>
    <dd>{children}</dd>
  </div>
);

const Problem = ({ device, number }: { device: string; number: string }) => (
  <article className="mb-6 border-b-2 border-slate-200 pb-[22px]">
    <dl className="relative flex flex-col gap-6">
      <div className="grid grid-cols-[52%_1fr]">
        <Field label="Устройство:">{device}</Field>
        <Field label="Инвент. номер:">{number}</Field>
      </div>
      <Field label="Тип ошибки:">Отсутствует подключение</Field>
      <Field label="Текст ошибки">
        Отсутствует подключение к серверу, ошибка узла связи XXXX, проверьте подключение к серверу
      </Field>
      <button type="button" aria-label="Действия" className="absolute top-[3px] right-[3px]">
        <DotsIcon />
      </button>
    </dl>
  </article>
);

const Comments = () => (
  <section className="flex w-[563px] shrink-0 flex-col gap-3">
    <div className="flex justify-between">
      <h3 className="font-medium">Комментарии</h3>
      <button type="button" aria-label="Фильтр комментариев" className="h-6">
        <SlidersIcon />
      </button>
    </div>
    <div className="flex flex-1 flex-col gap-6 rounded-lg border-2 border-slate-200 bg-[#eff4f9] p-4">
      <form className="flex flex-col gap-3 rounded-lg border-2 border-slate-200 bg-white p-4">
        <textarea
          aria-label="Комментарий"
          placeholder="Комментарий..."
          className="block h-[54px] w-full resize-none placeholder:text-slate-500"
        />
        <div className="flex items-center justify-between pl-3">
          <button type="button" aria-label="Прикрепить файл">
            <Paperclip className="h-6 w-6" strokeWidth={1.5} />
          </button>
          <button
            type="button"
            className="flex h-12 items-center gap-3 rounded-lg bg-[#0c1629] pr-[18px] pl-6 font-medium text-slate-50"
          >
            Отправить
            <SendIcon />
          </button>
        </div>
      </form>
      <article className="rounded-lg border-2 border-slate-200 bg-white p-4">
        <div className="flex items-center justify-between pr-[3px] text-lg/[30px] text-slate-500">
          Системное уведомление
          <button type="button" aria-label="Действия" className="text-slate-950">
            <DotsIcon />
          </button>
        </div>
        <p className="mt-[3px] font-medium">Создана заявка R12</p>
        <div className="mt-3 flex gap-[18px] text-lg/[30px] text-slate-500">
          <Meta icon={CalendarAddIcon}>Дата создания</Meta>
          <Meta icon={UserIcon}>Пользователь</Meta>
        </div>
      </article>
    </div>
  </section>
);

const NodeDialog = () => (
  <div
    role="dialog"
    aria-label="Название узла"
    className="flex h-full w-full max-w-[1340px] flex-col rounded-xl border-2 border-slate-200 bg-white p-[34px] shadow-lg"
  >
    <div className="flex h-9 items-center gap-1.5 pr-[5px]">
      <span className="flex w-9 justify-center text-slate-500">
        <NodeIcon />
      </span>
      <h2 className="flex-1 text-4xl font-semibold tracking-tight">Название узла</h2>
      <button type="button" aria-label="Ещё" className="flex h-9 w-9 items-center justify-center">
        <DotsIcon />
      </button>
      <button
        type="button"
        aria-label="Закрыть окно"
        className="relative ml-1.5 flex h-9 w-9 items-center justify-center rounded-lg bg-[#eff4f9]"
      >
        <CloseIcon />
        <HandCursor className="absolute top-6 left-2 z-10 h-8 w-7 drop-shadow" />
      </button>
    </div>
    <div className="mt-6 flex gap-[18px] text-lg/6 text-slate-500">
      <Meta icon={ClipboardEditIcon}>R12</Meta>
      <Meta icon={PinIcon}>Респ. Крым</Meta>
      <Meta icon={CalendarAddIcon}>10.01.2025, 08:40</Meta>
      <Meta icon={UserIcon}>Пользователь</Meta>
    </div>

    <div className="mt-[39px] flex min-h-0 flex-1 gap-[51px]">
      <div className="flex min-w-0 flex-1 gap-[27px]">
        <div className="min-w-0 flex-1 overflow-hidden border-b-2 border-slate-200">
          <dl className="grid grid-cols-[40%_1fr] items-center gap-y-[18px]">
            <dt className="font-medium">Приоритет:</dt>
            <dd className="flex">
              <span className="flex h-9 items-center rounded-full bg-[#eff4f9] px-4 text-lg">Приоритет</span>
            </dd>
            <dt className="font-medium">Маршрут:</dt>
            <dd className="flex">
              <span className="flex h-9 items-center rounded-full bg-slate-50 px-4 text-lg text-slate-400/80">
                Маршрут не назначен
              </span>
            </dd>
            <dt className="self-start font-medium">Контактное лицо:</dt>
            <dd className="flex gap-1.5">
              <span className="flex h-9 items-center gap-1.5 rounded-full bg-[#eff4f9] px-[15px] text-lg">
                <UserCircleIcon />
                Иван Иванович
              </span>
              <span className="flex h-9 items-center rounded-full bg-[#eff4f9] px-4 text-lg">+3</span>
            </dd>
          </dl>
          <div className="mt-12 mb-6 flex items-center justify-between">
            <div>
              <h3 className="font-medium">Проблемы</h3>
              <p className="text-lg/[30px] text-slate-500">Записей: 3</p>
            </div>
            <button
              type="button"
              className="flex h-15 items-center gap-1.5 rounded-lg border-2 border-slate-200 pr-[18px] pl-2.5"
            >
              <PenIcon />
              Редактировать
            </button>
          </div>
          {problems.map((p) => (
            <Problem key={p.device} {...p} />
          ))}
        </div>
        <div className="mt-[3px] mb-[71px] w-3 rounded-full bg-slate-200" />
      </div>
      <Comments />
    </div>

    <div className="mt-9 flex justify-end gap-3 font-medium">
      <button type="button" className="h-15 rounded-lg bg-[#eff4f9] px-[25px]">
        Закрыть
      </button>
      <button type="button" className="flex h-15 items-center gap-3 rounded-lg bg-[#0c1629] pr-[18px] pl-6 text-slate-50">
        В работу
        <ArrowIcon />
      </button>
    </div>
  </div>
);

const App = () => {
  return (
    <div className="flex h-screen flex-col bg-[#f0f0f0] font-[Inter,sans-serif] text-[21px]/[30px] text-slate-950">
      <BrowserBar />
      <div className="relative flex min-h-0 flex-1 bg-white">
        <Sidebar />
        <main className="flex min-w-0 flex-1 flex-col gap-6 px-[42px] pt-[23px] pb-9">
          <Toolbar />
          <MapPanel />
        </main>
        <div className="absolute inset-x-0 top-4 bottom-0 z-10 flex justify-center bg-black/50 pt-11 pb-[42px]">
          <NodeDialog />
        </div>
      </div>
      <div className="h-15" />
    </div>
  );
};

export default App;
